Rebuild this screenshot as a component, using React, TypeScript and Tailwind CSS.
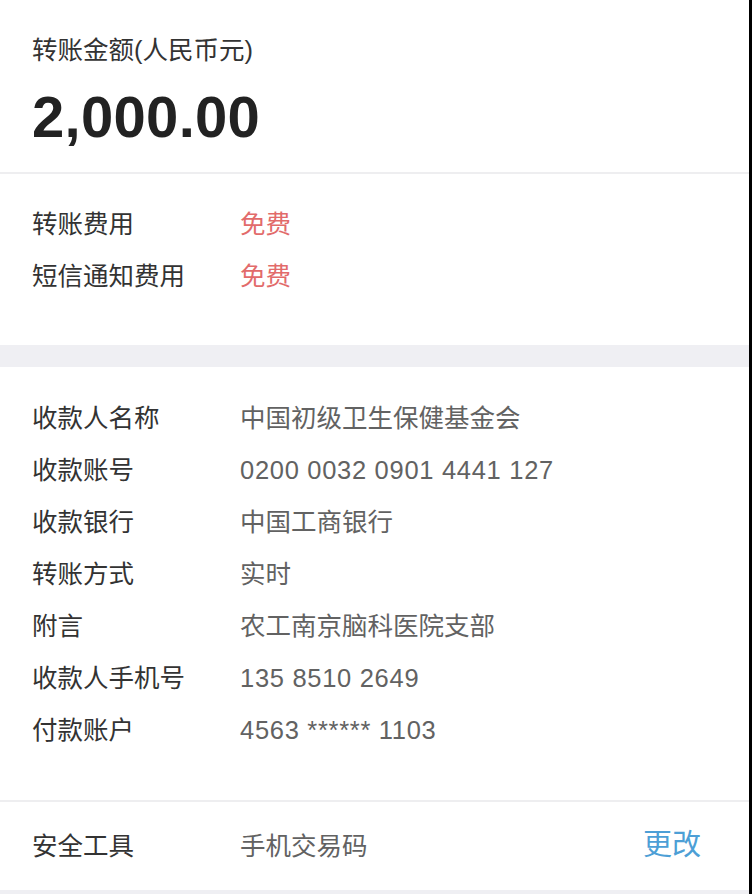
import React from 'react'

const font = { fontFamily: '"Liberation Sans", "Noto Sans CJK SC", sans-serif' }

const feeRows = [
  { label: '转账费用', value: '免费' },
  { label: '短信通知费用', value: '免费' },
]

const detailRows = [
  { label: '收款人名称', value: '中国初级卫生保健基金会' },
  { label: '收款账号', value: '0200 0032 0901 4441 127', numeric: true },
  { label: '收款银行', value: '中国工商银行' },
  { label: '转账方式', value: '实时' },
  { label: '附言', value: '农工南京脑科医院支部' },
  { label: '收款人手机号', value: '135 8510 2649', numeric: true },
  { label: '付款账户', value: '4563 ****** 1103', numeric: true },
]

function Row({ label, value, valueClass }: { label: string; value: string; valueClass: string }) {
  return (
    <div className="flex items-center h-[52px] text-[25.5px] leading-[52px]">
      <span className="w-[208px] shrink-0 text-[#333333]">{label}</span>
      <span className={valueClass}>{value}</span>
    </div>
  )
}

export default function App() {
  return (
    <div className="flex w-[752px] h-[894px] bg-black" style={font}>
      <div className="flex flex-col w-[749px] bg-white">
        <div className="h-[172px] px-8 pt-[32px]">
          <div className="text-[25.5px] leading-[36px] text-[#333333]">转账金额(人民币元)</div>
          <div className="mt-[17px] text-[58px] leading-[64px] font-bold text-[#222222] tracking-[0.3px]">
            2,000.00
          </div>
        </div>

        <div className="h-[2px] bg-[#eeeef0]" />

        <div className="h-[171px] px-8 pt-[24px]">
          {feeRows.map((r) => (
            <Row key={r.label} label={r.label} value={r.value} valueClass="text-[#e26b6b]" />
          ))}
        </div>

        <div className="h-[22px] bg-[#efeff3]" />

        <div className="h-[433px] px-8 pt-[25px]">
          {detailRows.map((r) => (
            <Row
              key={r.label}
              label={r.label}
              value={r.value}
              valueClass={r.numeric ? 'text-[#626262] tracking-[0.7px]' : 'text-[#626262]'}
            />
          ))}
        </div>

        <div className="h-[2px] bg-[#eeeef0]" />

        <div className="flex items-center h-[88px] px-8 text-[25.5px]">
          <span className="w-[208px] shrink-0 text-[#333333]">安全工具</span>
          <span className="flex-1 text-[#626262]">手机交易码</span>
          <span className="mr-[16px] text-[29px] text-[#4d9fd6]">更改</span>
        </div>

        <div className="flex-1 bg-[#efeff3]" />
      </div>
    </div>
  )
}
